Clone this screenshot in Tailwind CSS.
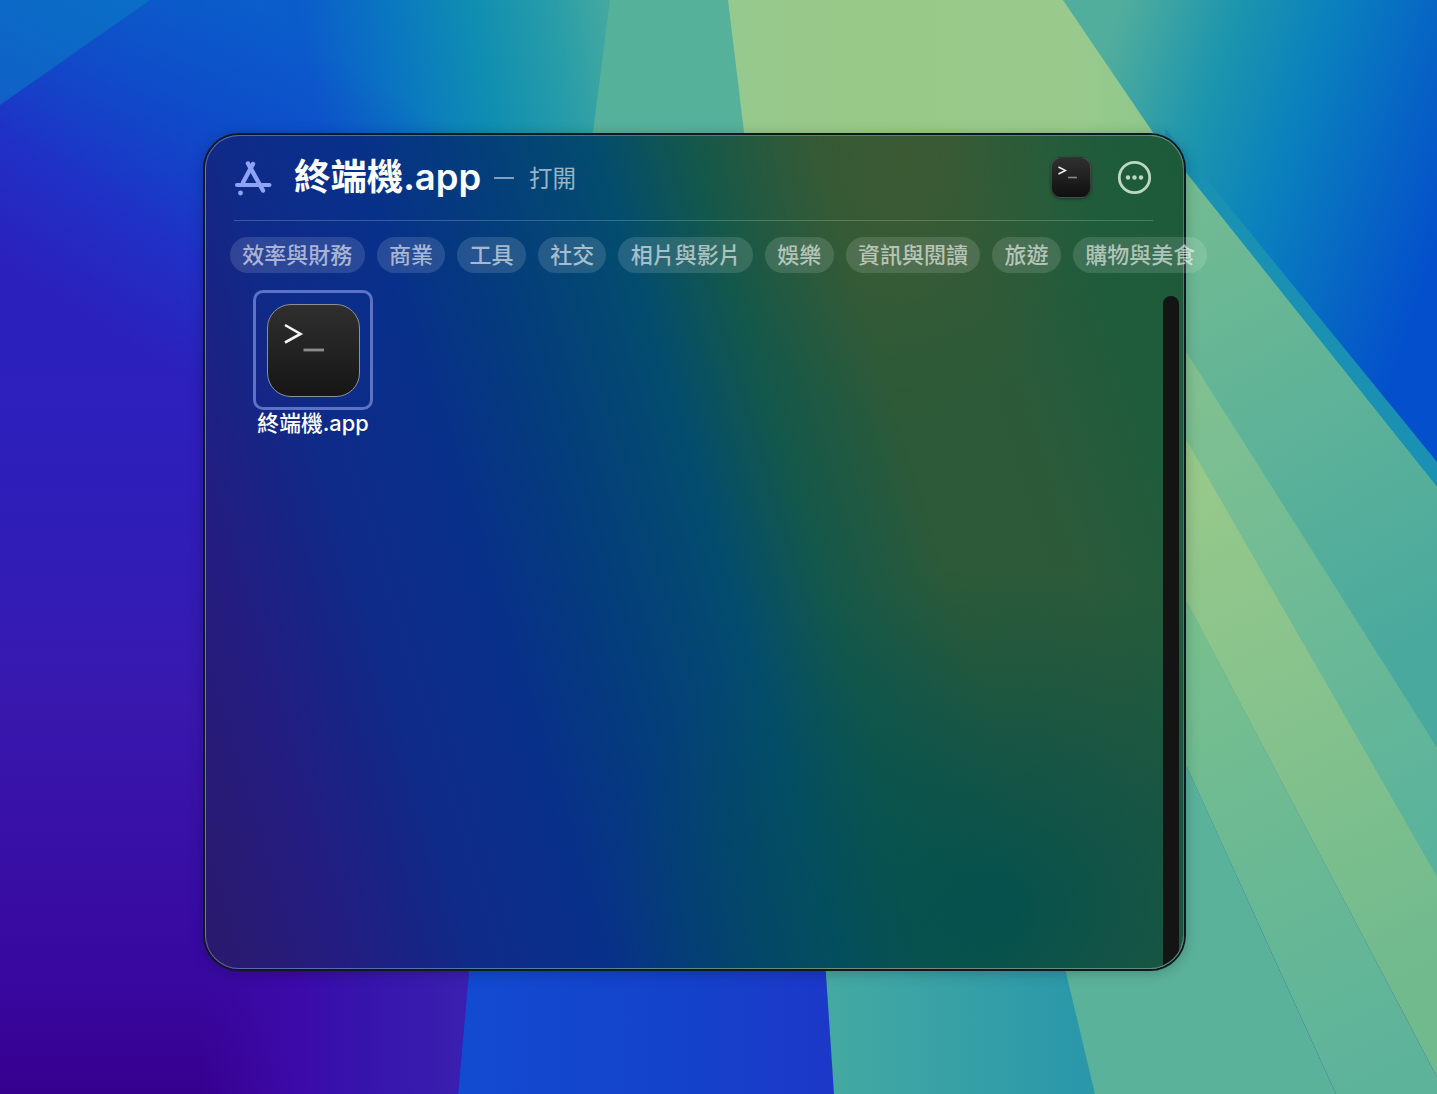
<!DOCTYPE html>
<html lang="zh-Hant">
<head>
    <meta charset="UTF-8">
    <meta name="viewport" content="width=device-width, initial-scale=1.0">
    <title>終端機.app</title>
    <script src="https://cdn.jsdelivr.net/npm/@tailwindcss/browser@4"></script>
</head>
<body class="relative w-[1437px] h-[1094px] overflow-hidden bg-[#1c38c8] font-['Inter','Noto_Sans_CJK_TC',sans-serif]">

    <!-- Wallpaper -->
    <svg class="absolute inset-0" width="1437" height="1094" viewBox="0 0 1437 1094" xmlns="http://www.w3.org/2000/svg">
        <defs>
            <linearGradient id="topStrip" gradientUnits="userSpaceOnUse" x1="0" y1="0" x2="760" y2="-130">
                <stop offset="0" stop-color="#0b6cc8"/>
                <stop offset="0.26" stop-color="#0a5fca"/>
                <stop offset="0.38" stop-color="#0b5ccb"/>
                <stop offset="0.50" stop-color="#0a78c0"/>
                <stop offset="0.60" stop-color="#0f8eb2"/>
                <stop offset="0.71" stop-color="#2a9ea8"/>
                <stop offset="0.79" stop-color="#4aab9e"/>
                <stop offset="1" stop-color="#5fb69c"/>
            </linearGradient>
            <linearGradient id="leftFade" gradientUnits="userSpaceOnUse" x1="250" y1="0" x2="60" y2="300">
                <stop offset="0" stop-color="#1238c8" stop-opacity="0"/>
                <stop offset="0.3" stop-color="#1238c8" stop-opacity="0.45"/>
                <stop offset="0.7" stop-color="#2030c6"/>
                <stop offset="1" stop-color="#2c20bc"/>
            </linearGradient>
            <linearGradient id="leftDown" gradientUnits="userSpaceOnUse" x1="0" y1="300" x2="0" y2="1094">
                <stop offset="0" stop-color="#2c20bc" stop-opacity="0"/>
                <stop offset="0.5" stop-color="#3818ae"/>
                <stop offset="0.85" stop-color="#3808a0"/>
                <stop offset="1" stop-color="#36008e"/>
            </linearGradient>
            <linearGradient id="bottomPurple" gradientUnits="userSpaceOnUse" x1="200" y1="0" x2="470" y2="0">
                <stop offset="0" stop-color="#3c0aa8" stop-opacity="0"/>
                <stop offset="0.35" stop-color="#3c0aa8"/>
                <stop offset="0.6" stop-color="#3614ac"/>
                <stop offset="1" stop-color="#3a20b0"/>
            </linearGradient>
            <linearGradient id="bottomBlue" gradientUnits="userSpaceOnUse" x1="470" y1="0" x2="830" y2="0">
                <stop offset="0" stop-color="#124ad0"/>
                <stop offset="0.6" stop-color="#1442ca"/>
                <stop offset="1" stop-color="#1c38c8"/>
            </linearGradient>
            <linearGradient id="bottomTeal" gradientUnits="userSpaceOnUse" x1="830" y1="0" x2="1080" y2="0">
                <stop offset="0" stop-color="#44a9a2"/>
                <stop offset="1" stop-color="#2a98aa"/>
            </linearGradient>
            <linearGradient id="lightGreen" gradientUnits="userSpaceOnUse" x1="730" y1="0" x2="1160" y2="0">
                <stop offset="0" stop-color="#96c98e"/>
                <stop offset="0.3" stop-color="#99c988"/>
                <stop offset="0.8" stop-color="#99ca8c"/>
                <stop offset="1" stop-color="#8ec78c"/>
            </linearGradient>
            <linearGradient id="topRight" gradientUnits="userSpaceOnUse" x1="1080" y1="120" x2="1437" y2="240">
                <stop offset="0" stop-color="#52ae9c"/>
                <stop offset="0.3" stop-color="#1c95ae"/>
                <stop offset="0.55" stop-color="#0a80be"/>
                <stop offset="0.85" stop-color="#0660c6"/>
                <stop offset="1" stop-color="#0450cc"/>
            </linearGradient>
            <linearGradient id="rightBase" gradientUnits="userSpaceOnUse" x1="1190" y1="200" x2="1437" y2="640">
                <stop offset="0" stop-color="#72bb92"/>
                <stop offset="1" stop-color="#49a99e"/>
            </linearGradient>
            <linearGradient id="bandAB" gradientUnits="userSpaceOnUse" x1="1190" y1="370" x2="1437" y2="860">
                <stop offset="0" stop-color="#82c190"/>
                <stop offset="1" stop-color="#58b29c"/>
            </linearGradient>
            <linearGradient id="bandBC" gradientUnits="userSpaceOnUse" x1="1190" y1="460" x2="1437" y2="960">
                <stop offset="0" stop-color="#98c98a"/>
                <stop offset="0.5" stop-color="#85c28d"/>
                <stop offset="1" stop-color="#70ba8e"/>
            </linearGradient>
            <linearGradient id="bandCD" gradientUnits="userSpaceOnUse" x1="1190" y1="640" x2="1400" y2="1060">
                <stop offset="0" stop-color="#78bf8e"/>
                <stop offset="1" stop-color="#5db39a"/>
            </linearGradient>
        </defs>

        <rect width="1437" height="1094" fill="url(#topStrip)"/>
        <rect width="1437" height="1094" fill="url(#leftFade)"/>
        <polygon points="0,0 150,0 0,105" fill="#0a7cc4" opacity="0.6"/>
        <rect y="300" width="480" height="794" fill="url(#leftDown)"/>
        <polygon points="200,960 470,960 458,1094 200,1094" fill="url(#bottomPurple)"/>
        <polygon points="610,0 728,0 745,140 592,140" fill="#56b19b"/>

        <polygon points="728,0 1063,0 1165,150 745,140" fill="url(#lightGreen)"/>
        <polygon points="1063,0 1437,0 1437,470 1165,150" fill="url(#topRight)"/>

        <!-- Rays on the right -->
        <polygon points="1165,128 1437,462 1437,487 1165,146" fill="#1a90b2"/>
        <polygon points="1060,140 1165,146 1437,487 1437,748 1187,353 1060,353" fill="url(#rightBase)"/>
        <polygon points="1060,353 1187,353 1437,748 1437,876 1187,441 1060,441" fill="url(#bandAB)"/>
        <polygon points="1060,441 1187,441 1437,876 1437,1077 1187,602 1060,602" fill="url(#bandBC)"/>
        <polygon points="1060,602 1187,602 1437,1077 1437,1094 1336,1094 1187,767 1060,767" fill="url(#bandCD)"/>
        <polygon points="1060,767 1187,767 1336,1094 1060,1094" fill="#5bb29b"/>

        <polygon points="470,960 825,960 834,1094 458,1094" fill="url(#bottomBlue)"/>
        <polygon points="825,960 1063,960 1095,1094 834,1094" fill="url(#bottomTeal)"/>
    </svg>

    <!-- Panel -->
    <main class="relative ml-[203px] mt-[133px] w-[983px] h-[838px] rounded-[36px] border-2 border-[#0c1a20] shadow-[0_2px_14px_rgba(0,0,0,0.22)]">
        <div class="absolute inset-0 rounded-[34px] overflow-hidden border border-white/30 bg-[radial-gradient(ellipse_200px_260px_at_700px_20px,rgba(82,90,44,0.4),rgba(82,90,44,0)),radial-gradient(ellipse_380px_340px_at_790px_770px,rgba(3,80,78,0.95),rgba(3,80,78,0)),linear-gradient(73deg,#2b1a6c_0%,#241c80_11%,#0f2a88_22%,#08308a_32%,#043c7c_41%,#034c6e_52%,#14584a_60%,#2d5a38_70%,#2c5a39_80%,#1f5c3c_90%,#1d5a3a_100%)]">
            <!-- Scrollbar track -->
            <div class="absolute right-[4px] top-[160px] bottom-0 w-[16px] rounded-t-full bg-[#141414]"></div>
        </div>

        <div class="relative flex flex-col">
            <!-- Header -->
            <header class="flex items-center h-[41px] mt-[22px] ml-[29px] mr-[32px]">
                <svg class="w-[40px] h-[40px]" viewBox="0 0 40 40" fill="none" stroke="#8fa3f5" stroke-linecap="round">
                    <path d="M19 6 L9 24.5" stroke-width="4.4"/>
                    <path d="M14 5.5 L29 32.5" stroke-width="4.4"/>
                    <path d="M3 27 H35.5" stroke-width="4"/>
                    <circle cx="6.5" cy="35" r="2.4" fill="#8fa3f5" stroke="none"/>
                </svg>
                <h1 class="ml-[20px] text-[36.4px] leading-none font-semibold text-white">終端機.app</h1>
                <span class="ml-[13px] w-[20px] h-[2px] bg-white/50"></span>
                <span class="ml-[15px] mt-[2px] text-[23.5px] leading-none text-white/60">打開</span>

                <div class="ml-auto w-[40px] h-[41px] rounded-[10px] border border-white/15 bg-[linear-gradient(#303030,#0f0f0f)] shadow-[0_1px_3px_rgba(0,0,0,0.4)]">
                    <svg width="38" height="39" viewBox="0 0 38 39" fill="none">
                        <path d="M6.5 9 L13.5 12.5 L6.5 16" stroke="#f0f0f0" stroke-width="1.4"/>
                        <path d="M16 19.5 H25" stroke="#8a8a8a" stroke-width="1.6"/>
                    </svg>
                </div>
                <svg class="ml-[26px]" width="35" height="35" viewBox="0 0 35 35" fill="none">
                    <circle cx="17.5" cy="17.5" r="15.2" stroke="#bcd8c0" stroke-width="2.8"/>
                    <circle cx="11" cy="17.5" r="2.2" fill="#bcd8c0"/>
                    <circle cx="17.5" cy="17.5" r="2.2" fill="#bcd8c0"/>
                    <circle cx="24" cy="17.5" r="2.2" fill="#bcd8c0"/>
                </svg>
            </header>

            <div class="h-px ml-[29px] mr-[31px] mt-[22px] bg-white/20"></div>

            <!-- Categories -->
            <nav class="flex gap-[12px] mt-[16px] ml-[25px] w-max text-[22px] leading-none font-medium text-white/60">
                <span class="h-[36px] px-[12.3px] flex items-center rounded-full bg-white/13">效率與財務</span>
                <span class="h-[36px] px-[12.3px] flex items-center rounded-full bg-white/13">商業</span>
                <span class="h-[36px] px-[12.3px] flex items-center rounded-full bg-white/13">工具</span>
                <span class="h-[36px] px-[12.3px] flex items-center rounded-full bg-white/13">社交</span>
                <span class="h-[36px] px-[12.3px] flex items-center rounded-full bg-white/13">相片與影片</span>
                <span class="h-[36px] px-[12.3px] flex items-center rounded-full bg-white/13">娛樂</span>
                <span class="h-[36px] px-[12.3px] flex items-center rounded-full bg-white/13">資訊與閱讀</span>
                <span class="h-[36px] px-[12.3px] flex items-center rounded-full bg-white/13">旅遊</span>
                <span class="h-[36px] px-[12.3px] flex items-center rounded-full bg-white/13">購物與美食</span>
            </nav>

            <!-- App grid -->
            <div class="flex flex-col items-center w-[120px] ml-[48px] mt-[17px]">
                <div class="w-[120px] h-[120px] flex items-center justify-center rounded-[10px] border-[3px] border-[#5c72c4]">
                    <div class="w-[93px] h-[93px] rounded-[24px] border border-[#8f8f94] bg-[linear-gradient(#2f2f2f,#161616)]">
                        <svg width="91" height="91" viewBox="0 0 91 91" fill="none">
                            <path d="M17 20 L32.5 29 L17 37.5" stroke="#f5f5f5" stroke-width="2.6"/>
                            <path d="M35.5 45 H56" stroke="#8c8c8c" stroke-width="2.8"/>
                        </svg>
                    </div>
                </div>
                <span class="-mt-px text-[21.8px] leading-[28px] font-medium text-white whitespace-nowrap">終端機.app</span>
            </div>
        </div>
    </main>
</body>
</html>
